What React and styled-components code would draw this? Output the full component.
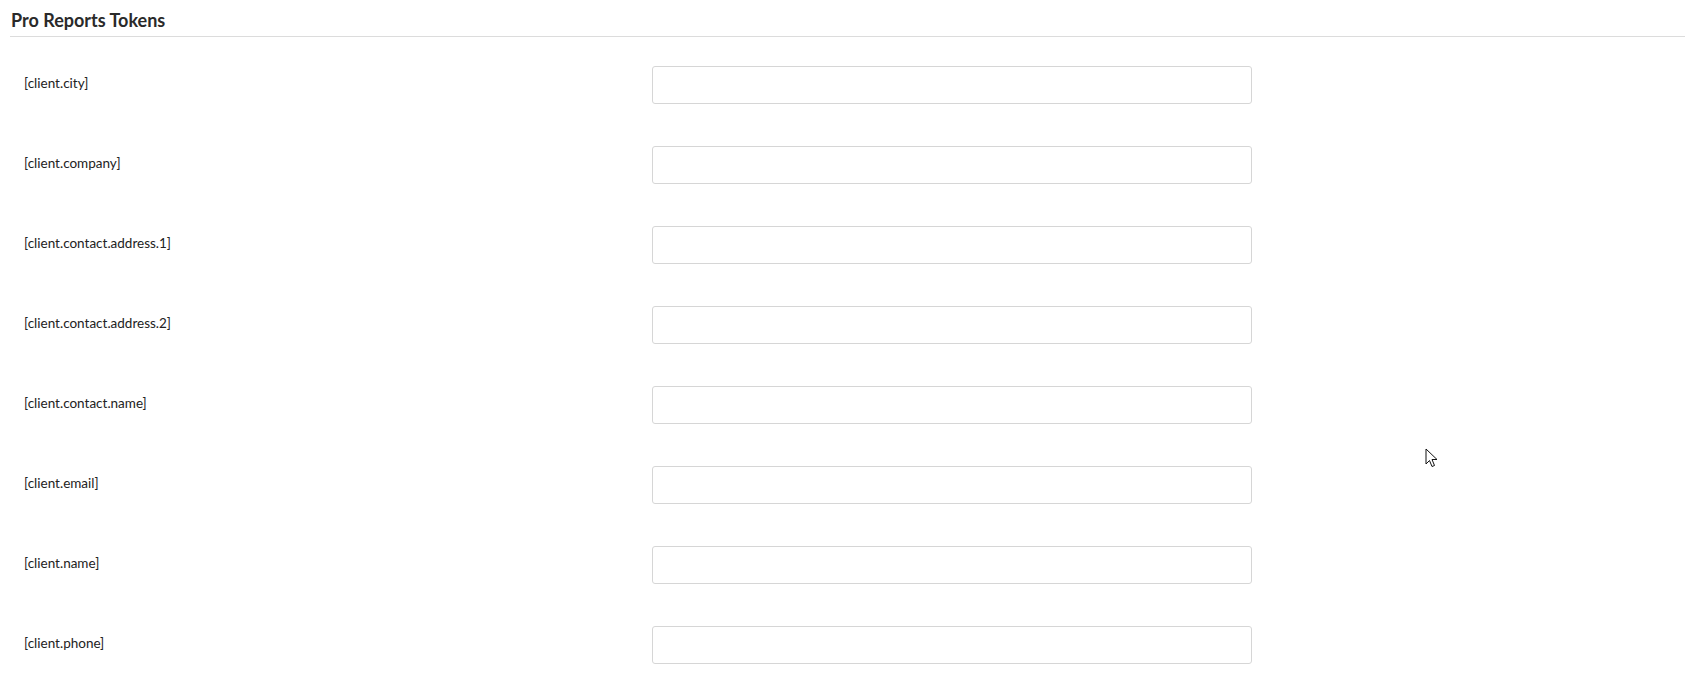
import styled, { createGlobalStyle } from 'styled-components';

const tokens = [
	'[client.city]',
	'[client.company]',
	'[client.contact.address.1]',
	'[client.contact.address.2]',
	'[client.contact.name]',
	'[client.email]',
	'[client.name]',
	'[client.phone]',
];

const GlobalStyle = createGlobalStyle`
	html, body {
		margin: 0;
		padding: 0;
		background: #fff;
		font-family: Lato, "Open Sans", sans-serif;
		color: #222;
		overflow: hidden;
	}
`;

const Cursor = () => (
	<S.CursorIcon width="14" height="22" viewBox="0 0 14 22">
		<path
			d="M1 1 L1 16 L4.5 12.5 L7 18.5 L9.5 17.5 L7 11.5 L12 11.5 Z"
			fill="#fff"
			stroke="#111"
			strokeWidth="1"
			strokeLinejoin="miter"
		/>
	</S.CursorIcon>
);

const App = () => {
	return (
		<>
			<GlobalStyle />
			<S.Wrapper>
				<S.Title>Pro Reports Tokens</S.Title>
				<S.List>
					{tokens.map(token => (
						<S.Row key={token}>
							<S.Label>{token}</S.Label>
							<S.Input type="text" />
						</S.Row>
					))}
				</S.List>
				<Cursor />
			</S.Wrapper>
		</>
	);
};

export default App;

const Wrapper = styled.div`
	position: relative;
	padding: 0 10px;
	height: 685px;
`;

const Title = styled.h3`
	margin: 0;
	padding: 10px 0 5px 1px;
	font-size: 18px;
	font-weight: 700;
	line-height: 21px;
	color: #2a2a2a;
	border-bottom: 1px solid #dcdcdc;
`;

const List = styled.div`
	display: flex;
	flex-direction: column;
	gap: 42px;
	padding-top: 29px;
`;

const Row = styled.div`
	display: flex;
	align-items: center;
`;

const Label = styled.label`
	width: 642px;
	padding-left: 14px;
	box-sizing: border-box;
	font-size: 13.5px;
	margin-top: -4px;
	color: #222;
`;

const Input = styled.input`
	width: 600px;
	height: 38px;
	box-sizing: border-box;
	border: 1px solid #d6d6d6;
	border-radius: 3px;
	background: #fff;
	padding: 6px 10px;
	font-family: inherit;
	font-size: 13px;
	outline: none;
`;

const CursorIcon = styled.svg`
	position: absolute;
	left: 1425px;
	top: 448px;
`;

const S = {
	Wrapper,
	Title,
	List,
	Row,
	Label,
	Input,
	CursorIcon,
};
